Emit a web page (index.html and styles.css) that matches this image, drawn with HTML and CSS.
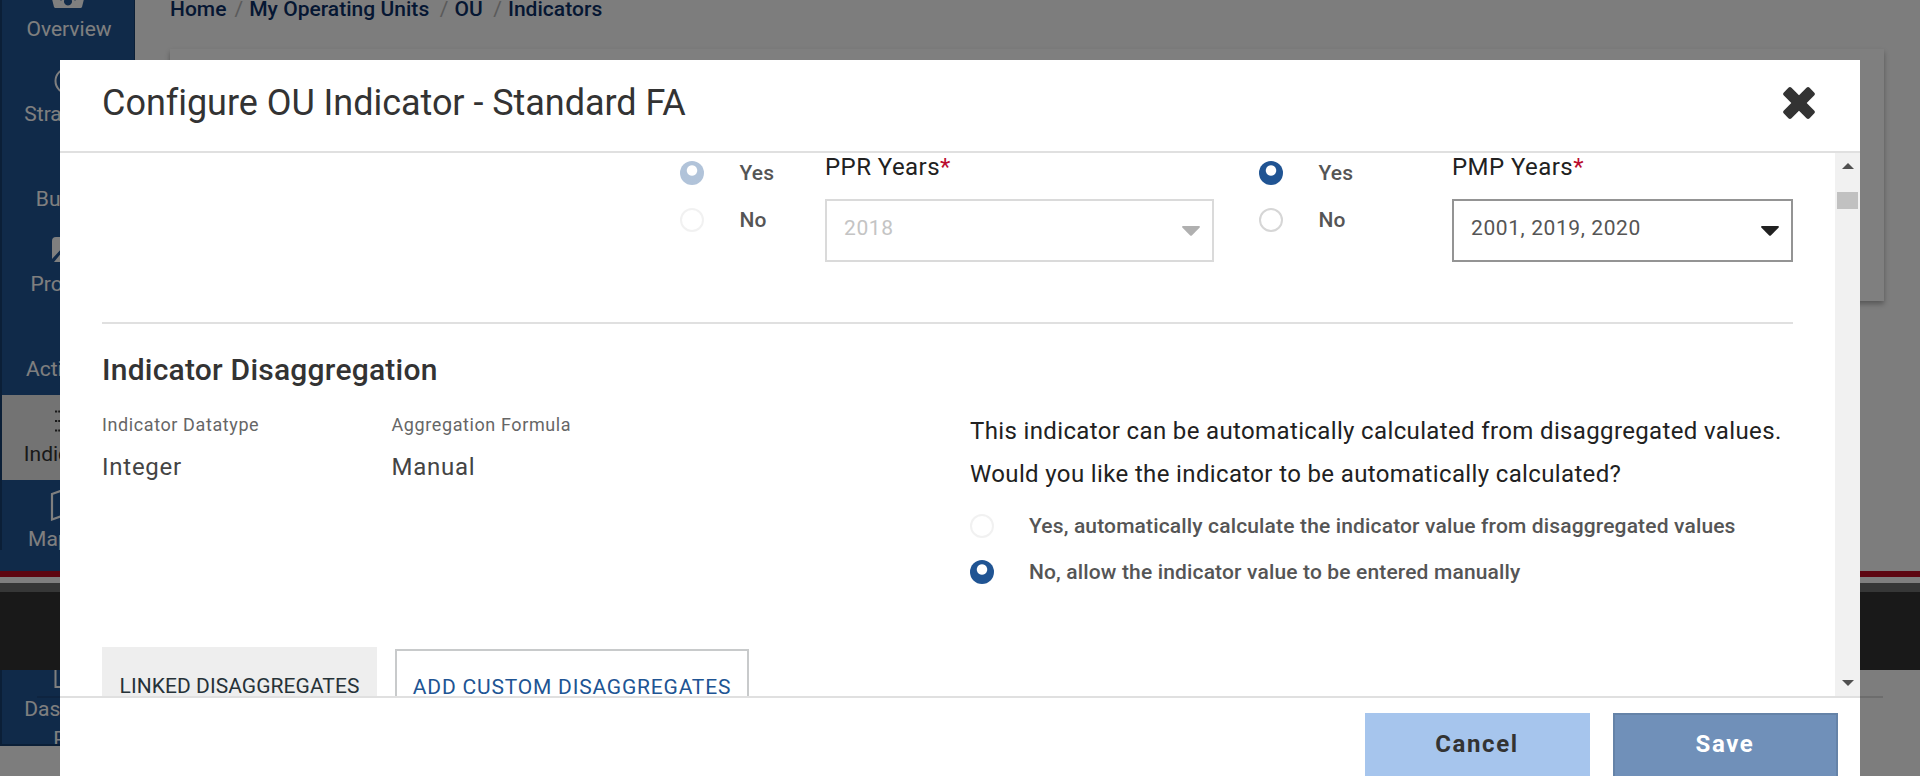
FILE: index.html
```html
<!DOCTYPE html>
<html lang="en">
<head>
<meta charset="utf-8">
<title>Configure OU Indicator</title>
<link rel="stylesheet" href="styles.css">
</head>
<body>
<div class="page">
  <nav class="sidebar">
    <a class="nav-item nav-first">
      <svg class="nav-icon" viewBox="0 0 34 28"><path fill="currentColor" fill-rule="evenodd" d="M3 27 L.5 17 A16.500 16.500 0 0 1 33.500 17 L31 27 Q30.500 28 29.500 28 H4.500 Q3.500 28 3 27 Z M17 17.500 a4 4 0 1 0 .01 0 Z M10 16.500 a2 2 0 1 0 .01 0 Z M24 16.500 a2 2 0 1 0 .01 0 Z"/></svg>
      <span>Overview</span></a>
    <a class="nav-item nav-strategic">
      <svg class="nav-icon" viewBox="0 0 28 28"><circle cx="14" cy="14" r="12.500" fill="none" stroke="currentColor" stroke-width="2"/></svg>
      <span>Strategic</span></a>
    <a class="nav-item"><i class="nav-icon"></i><span>Budget</span></a>
    <a class="nav-item">
      <svg class="nav-icon" viewBox="0 0 34 28"><path fill="currentColor" d="M5 0 H30 a3 3 0 0 1 3 3 V25 H3 L12 14 L20 21 V17 L12 10 L1 22 V4 a4 4 0 0 1 4-4 Z"/></svg>
      <span>Projects</span></a>
    <a class="nav-item"><i class="nav-icon"></i><span>Activities</span></a>
    <a class="nav-item nav-active">
      <svg class="nav-icon" viewBox="0 0 28 28"><path fill="none" stroke="currentColor" stroke-width="2.200" d="M1 4.500 H3.200 M4.200 4.500 H27 M1 14 H3.200 M4.200 14 H27 M1 23.500 H3.200 M4.200 23.500 H27"/></svg>
      <span>Indicators</span></a>
    <a class="nav-item">
      <svg class="nav-icon nav-map" viewBox="0 0 36 32"><path fill="none" stroke="currentColor" stroke-width="2.200" d="M2 5 L12 1.500 L24 5 L34 1.500 V27 L24 30.500 L12 27 L2 30.500 Z"/></svg>
      <span>Mapping</span></a>
  </nav>
  <main class="main">
    <div class="crumbs"><a>Home</a><i>/</i><a>My Operating Units</a><i class="gap">/</i><a>OU</a><i class="gap">/</i><a>Indicators</a></div>
    <section class="panel"></section>
  </main>
  <div class="site-footer"></div>
  <div class="subnav">
    <svg class="subnav-icon" viewBox="0 0 28 18"><path fill="none" stroke="currentColor" stroke-width="2" d="M1.500 0 V17 H27 V0"/></svg>
    <span>Dashboard</span><span class="subnav-second">PPR</span>
  </div>
</div>
<div class="backdrop"></div>

<div class="modal">
  <header class="modal-head">
    <h1>Configure OU Indicator - Standard FA</h1>
    <svg class="close" viewBox="-16 -16 32 32"><rect x="-18.200" y="-5.400" width="36.400" height="10.800" rx="2.200" transform="rotate(45)"/><rect x="-18.200" y="-5.400" width="36.400" height="10.800" rx="2.200" transform="rotate(-45)"/></svg>
  </header>
  <div class="modal-body">
    <div class="content">
      <div class="years">
        <div class="radios">
          <label class="radio"><i class="dot on faded"></i>Yes</label>
          <label class="radio"><i class="dot faded"></i>No</label>
        </div>
        <div class="field field-ppr">
          <div class="field-label">PPR Years<b>*</b></div>
          <div class="select disabled"><span>2018</span><svg class="caret" viewBox="0 0 18 10"><path d="M1 0 H17 Q18.500 .5 17.500 1.700 L9.800 9.400 Q9 10 8.200 9.400 L.5 1.700 Q-.5 .5 1 0 Z"/></svg></div>
        </div>
        <div class="radios radios-pmp">
          <label class="radio"><i class="dot on"></i>Yes</label>
          <label class="radio"><i class="dot"></i>No</label>
        </div>
        <div class="field field-pmp">
          <div class="field-label">PMP Years<b>*</b></div>
          <div class="select"><span>2001, 2019, 2020</span><svg class="caret" viewBox="0 0 18 10"><path d="M1 0 H17 Q18.500 .5 17.500 1.700 L9.800 9.400 Q9 10 8.200 9.400 L.5 1.700 Q-.5 .5 1 0 Z"/></svg></div>
        </div>
      </div>
      <h2>Indicator Disaggregation</h2>
      <div class="details">
        <div class="detail"><div class="caption">Indicator Datatype</div><div class="value">Integer</div></div>
        <div class="detail detail-wide"><div class="caption">Aggregation Formula</div><div class="value">Manual</div></div>
        <div class="question">
          <p>This indicator can be automatically calculated from disaggregated values.</p>
          <p class="second">Would you like the indicator to be automatically calculated?</p>
          <label class="radio"><i class="dot faded"></i><span>Yes, automatically calculate the indicator value from disaggregated values</span></label>
          <label class="radio"><i class="dot on"></i><span>No, allow the indicator value to be entered manually</span></label>
        </div>
      </div>
      <div class="tabs">
        <button class="tab tab-current">LINKED DISAGGREGATES</button>
        <button class="tab tab-add">ADD CUSTOM DISAGGREGATES</button>
      </div>
    </div>
    <div class="scrollbar"><i class="up"></i><i class="thumb"></i><i class="down"></i></div>
  </div>
  <footer class="modal-foot">
    <button class="btn cancel">Cancel</button>
    <button class="btn save">Save</button>
  </footer>
</div>
</body>
</html>
```
FILE: styles.css
```css
* { box-sizing: border-box; }
html, body { margin: 0; height: 776px; overflow: hidden; }
body { position: relative; font-family: Roboto, "Liberation Sans", sans-serif; background: #fafafa; }
i { font-style: normal; }
h1, h2, p { margin: 0; font-weight: 400; }
button { font-family: inherit; border: 0; padding: 0; }

.page { display: grid; grid-template-columns: 135px 1fr; grid-template-rows: 571px 99px 106px; height: 776px; }
.sidebar { display: flex; flex-direction: column; padding-left: 2px; background: linear-gradient(90deg, #173e6f 2px, #205493 2px) 0 0 / 100% 550px no-repeat #205493; border-right: 1px solid #173e6f; overflow: hidden; color: #fff; }
.nav-item { display: flex; flex-direction: column; align-items: center; flex: none; height: 85px; padding-top: 12px; font-size: 21px; line-height: 26px; }
.nav-item span { margin-top: -2px; padding-left: 2px; }
.nav-first { height: 55px; padding-top: 0; }
.nav-first .nav-icon { margin-top: -20px; }
.nav-first span { margin-top: 0; }
.nav-strategic span { padding: 0 4px 0 0; }
.nav-icon { display: block; flex: none; height: 28px; width: 34px; margin-bottom: 8px; }
.nav-active { background: #e6e6e6; color: #333; }
.nav-active span { padding-left: 5px; }
.nav-map { height: 32px; width: 36px; margin: -3px 0 7px; }
.main { padding: 0 36px 0 35px; }
.crumbs { display: flex; height: 49px; font-size: 21px; line-height: 18px; font-weight: 500; color: #0b2f66; letter-spacing: .03px; }
.crumbs i { font-weight: 400; color: #b5b5b5; margin: 0 6px 0 8px; }
.crumbs i.gap { margin: 0 6px 0 10.500px; }
.panel { height: 252px; background: #fff; box-shadow: 0 3px 5px rgba(0,0,0,.3); }
.site-footer { grid-column: 1 / 3; background: #333; border-top: 6px solid #ba0c22; }
.site-footer::before { content: ""; display: block; height: 9px; background: #6d6e6e; border-top: 6px solid #fff; }
.subnav { display: flex; flex-direction: column; align-items: center; height: 76px; overflow: hidden; background: #205493; color: #fff; border: solid #173e6f; border-width: 0 1px 2px 2px; font-size: 21px; line-height: 29px; }
.subnav-icon { flex: none; width: 28px; height: 18px; margin-bottom: 7px; }
.subnav span { padding-left: 14px; }
.subnav .subnav-second { padding-left: 10px; margin-top: 1px; }
.backdrop { position: absolute; inset: 0; background: rgba(0,0,0,.5); }

.modal { position: absolute; left: 60px; right: 60px; top: 60px; bottom: 0; display: flex; flex-direction: column; background: #fff; }
.modal-head { display: flex; flex: none; height: 93px; padding: 0 45px 0 42px; justify-content: space-between; border-bottom: 2px solid #e0e0e0; }
.modal-head h1 { font-size: 36px; line-height: 86px; color: #333; letter-spacing: -.04px; }
.close { width: 32px; height: 32px; margin-top: 27px; fill: #333; }
.modal-body { display: flex; flex: none; height: 543px; overflow: hidden; }
.content { flex: 1; min-width: 0; padding: 0 42px; }

.years { display: flex; height: 171px; border-bottom: 2px solid #e0e0e0; padding-left: 578px; }
.radios { width: 145px; padding-top: 8px; }
.radio { display: flex; align-items: flex-start; height: 46.500px; font-size: 21px; line-height: 24px; font-weight: 500; color: #555; letter-spacing: .2px; }
.dot { flex: none; width: 24px; height: 24px; margin-right: 35px; border: 2px solid #d6d6d6; border-radius: 50%; }
.years .dot { margin-right: 35.500px; }
.dot.on { border: 0; background: radial-gradient(circle at 12px 9.500px, #fff 4.700px, #205493 5.700px); }
.dot.faded { opacity: .35; }
.field { margin-top: 1px; }
.field-ppr { width: 389px; }
.field-pmp { width: 341px; }
.radios-pmp { margin-left: 45px; width: 193px; }
.field-label { font-size: 24px; line-height: 26px; color: #212121; letter-spacing: .45px; }
.field-label b { color: #ba0c2f; font-weight: 400; }
.select { display: flex; justify-content: space-between; height: 63px; margin-top: 19px; padding: 0 12.500px 0 17px; border: 2px solid #949494; font-size: 21px; line-height: 54px; color: #555; letter-spacing: .6px; }
.caret { width: 18px; height: 10px; margin-top: 25px; fill: #212121; }
.select.disabled { border-color: #dadada; color: #c4c4c4; }
.disabled .caret { fill: #b0b0b0; }

.content h2 { margin-top: 27px; font-size: 30px; line-height: 38px; font-weight: 500; color: #333; letter-spacing: .23px; }
.details { display: flex; height: 258px; }
.detail { width: 289.500px; padding-top: 23px; color: #666; letter-spacing: .75px; }
.detail-wide { width: 578.500px; }
.caption { font-size: 18px; line-height: 26px; letter-spacing: .6px; }
.value { font-size: 24px; line-height: 32px; margin-top: 13px; color: #444; }
.question { white-space: nowrap; flex: 1; padding-top: 21px; }
.question p { font-size: 24px; line-height: 43px; color: #212121; letter-spacing: .36px; }
.question p.second { margin-bottom: 17.500px; }
.question .radio { letter-spacing: .15px; }
.tabs { display: flex; align-items: flex-start; gap: 18px; }
.tab { height: 76px; font-size: 21px; }
.tab-current { width: 275px; background: #eee; color: #263238; line-height: 78px; letter-spacing: .06px; }
.tab-add { width: 354px; margin-top: 2px; border: 2px solid #c8cacb; background: #fff; color: #205493; letter-spacing: .8px; }

.scrollbar { flex: none; display: flex; flex-direction: column; align-items: center; width: 25px; background: #f1f1f1; padding: 10px 0 10px; }
.up, .down { border: 6px solid transparent; width: 0; height: 0; }
.up { border-top: 0; border-bottom-color: #505050; }
.down { border-bottom: 0; border-top-color: #505050; margin-top: auto; }
.thumb { width: 21px; height: 17px; margin-top: 23px; background: #c1c1c1; }

.modal-foot { display: flex; flex: none; justify-content: flex-end; gap: 23px; margin: 0 -23px; height: 80px; padding: 15px 45px 0; border-top: 2px solid rgba(0,0,0,.12); }
.btn { width: 225px; height: 66px; padding: 0 1px 4px 0; font-size: 24px; font-weight: 700; letter-spacing: 1.600px; }
.cancel { background: #a6c5ed; color: #333; }
.save { background: #7090b9; color: #fff; border: 2px solid #6583a8; }
```
